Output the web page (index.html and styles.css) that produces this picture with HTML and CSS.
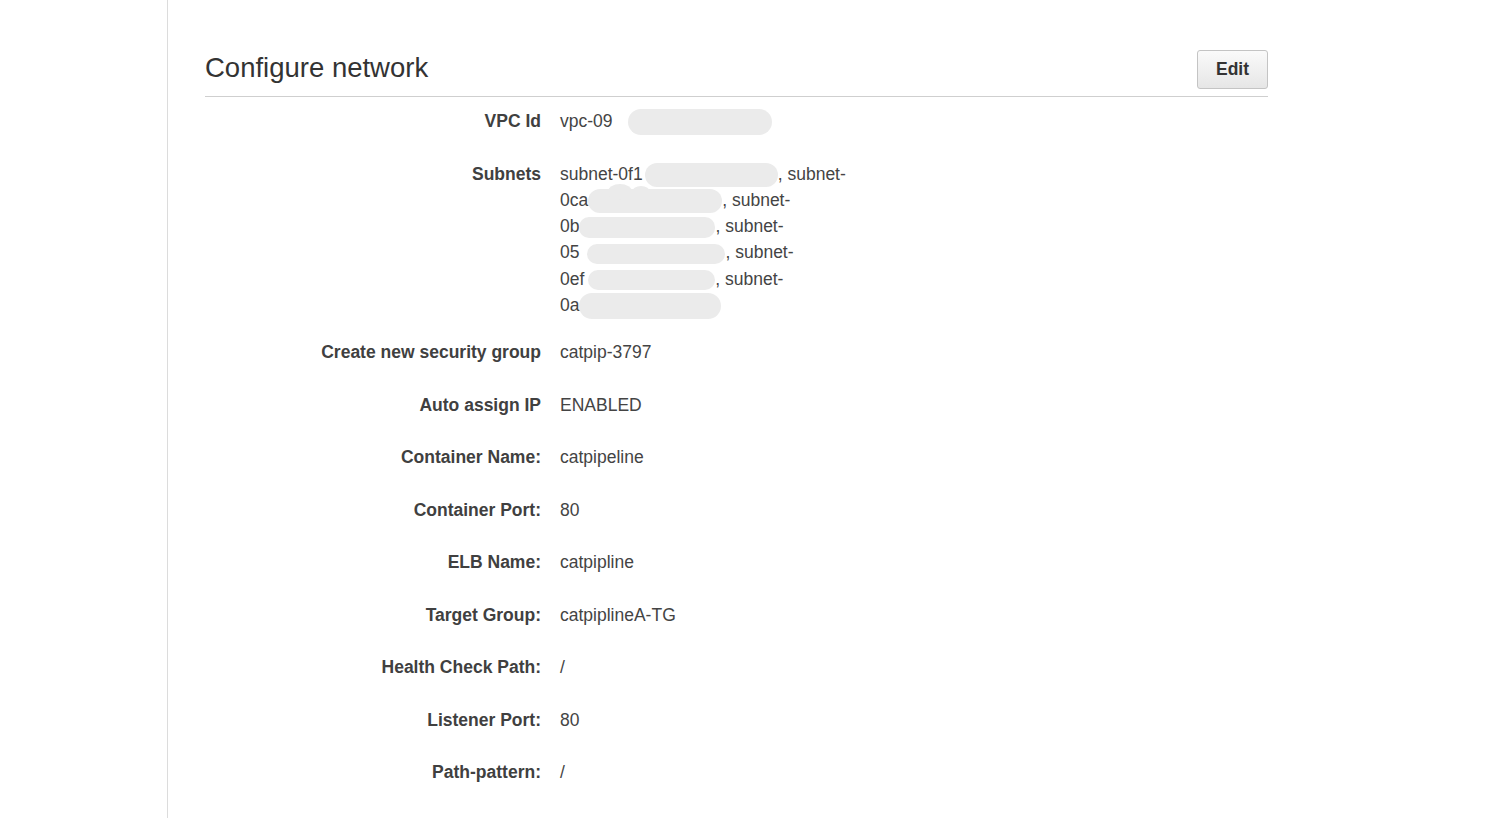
FILE: index.html
```html
<!DOCTYPE html>
<html>
<head>
<meta charset="utf-8">
<link rel="stylesheet" href="styles.css">
</head>
<body>
<div class="page">
  <aside class="sidebar"></aside>
  <main class="content">
    <div class="header">
      <h1 class="title">Configure network</h1>
      <button class="btn">Edit</button>
    </div>
    <div class="rows">
      <div class="row">
        <div class="label">VPC Id</div>
        <div class="value">vpc-09<span class="blob b-vpc"></span></div>
      </div>
      <div class="row row-subnets">
        <div class="label">Subnets</div>
        <div class="value">
          subnet-0f1<span class="blob b1"></span>, subnet-<br>
          0ca<span class="blob b2"><span class="bump bump-a"></span><span class="bump bump-b"></span></span>, subnet-<br>
          0b<span class="blob b3"></span>, subnet-<br>
          05<span class="blob b4"></span>, subnet-<br>
          0ef<span class="blob b5"></span>, subnet-<br>
          0a<span class="blob b6"></span>
        </div>
      </div>
      <div class="row">
        <div class="label">Create new security group</div>
        <div class="value">catpip-3797</div>
      </div>
      <div class="row">
        <div class="label">Auto assign IP</div>
        <div class="value">ENABLED</div>
      </div>
      <div class="row">
        <div class="label">Container Name:</div>
        <div class="value">catpipeline</div>
      </div>
      <div class="row">
        <div class="label">Container Port:</div>
        <div class="value">80</div>
      </div>
      <div class="row">
        <div class="label">ELB Name:</div>
        <div class="value">catpipline</div>
      </div>
      <div class="row">
        <div class="label">Target Group:</div>
        <div class="value">catpiplineA-TG</div>
      </div>
      <div class="row">
        <div class="label">Health Check Path:</div>
        <div class="value">/</div>
      </div>
      <div class="row">
        <div class="label">Listener Port:</div>
        <div class="value">80</div>
      </div>
      <div class="row">
        <div class="label">Path-pattern:</div>
        <div class="value">/</div>
      </div>
    </div>
  </main>
</div>
</body>
</html>
```

FILE: styles.css
```css
html, body {
  margin: 0;
  padding: 0;
  background: #fff;
}
body {
  font-family: "Liberation Sans", Arial, sans-serif;
  color: #444;
  overflow: hidden;
}
.page {
  display: flex;
  min-height: 818px;
}
.sidebar {
  width: 167px;
  flex: 0 0 167px;
  border-right: 1px solid #dcdcdc;
}
.content {
  padding: 50px 0 0 37px;
  width: 1063px;
}
.header {
  display: flex;
  align-items: center;
  justify-content: space-between;
  padding-bottom: 7px;
  border-bottom: 1px solid #cfcfcf;
}
.title {
  margin: 0;
  font-size: 27.5px;
  font-weight: normal;
  line-height: 34px;
  color: #333;
  padding-bottom: 4px;
}
.btn {
  width: 71px;
  height: 39px;
  font-family: "Liberation Sans", Arial, sans-serif;
  font-size: 17.5px;
  font-weight: bold;
  color: #333;
  background: linear-gradient(#fafafa, #e6e6e6);
  border: 1px solid #c4c4c4;
  border-radius: 3px;
  padding: 0;
}
.rows {
  padding-top: 11px;
}
.row {
  display: flex;
  font-size: 17.5px;
  line-height: 26.25px;
  margin-bottom: 26.25px;
}
.row-subnets {
  margin-bottom: 21px;
}
.label {
  width: 336px;
  flex: 0 0 336px;
  text-align: right;
  font-weight: bold;
  color: #404040;
}
.value {
  margin-left: 19px;
  color: #444;
}
.blob {
  display: inline-block;
  position: relative;
  background: #ebebeb;
  height: 24px;
  margin: -3px 0;
  vertical-align: middle;
  border-radius: 12px;
}
.b-vpc { width: 144px; height: 26px; margin-left: 15px; border-radius: 13px; }
.b1 { width: 133px; margin-left: 2px; }
.b2 { width: 134px; }
.b3 { width: 136px; height: 21px; border-radius: 10px; }
.b4 { width: 138px; height: 20px; margin-left: 8px; border-radius: 10px; }
.b5 { width: 127px; height: 20px; margin-left: 4px; border-radius: 10px; }
.b6 { width: 142px; height: 26px; border-radius: 13px; }
.bump {
  position: absolute;
  background: #ebebeb;
  border-radius: 50%;
}
.bump-a { left: 20px; top: -5px; width: 24px; height: 16px; }
.bump-b { left: 44px; top: -3px; width: 18px; height: 12px; }
```
